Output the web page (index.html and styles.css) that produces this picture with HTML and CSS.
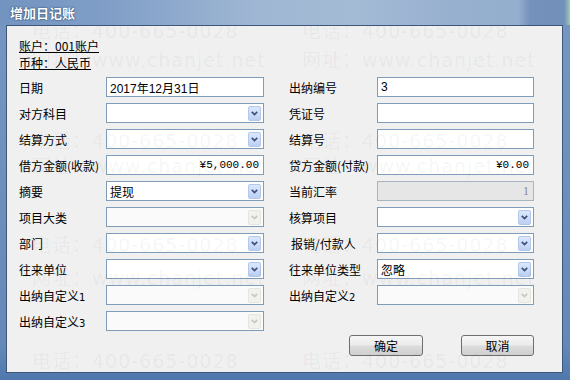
FILE: index.html
```html
<!DOCTYPE html>
<html>
<head>
    <title>增加日记账</title>
    <link rel="stylesheet" href="styles.css">
</head>
<body>
    <div class="window">
        <div class="titlebar"><span class="title">增加日记账</span></div>
        <div class="frame">
            <div class="client">
                <div class="info">账户：001账户</div>
                <div class="info">币种：人民币</div>

                <div class="fields">
                    <div class="row">
                        <div class="cell"><label>日期</label><div class="box">2017年12月31日</div></div>
                        <div class="cell right"><label>出纳编号</label><div class="box">3</div></div>
                    </div>
                    <div class="row">
                        <div class="cell"><label>对方科目</label><div class="box combo"><span class="val"></span><span class="drop"><svg viewBox="0 0 7 5"><path d="M0.8 0.8 L3.5 3.6 L6.2 0.8"/></svg></span></div></div>
                        <div class="cell right"><label>凭证号</label><div class="box"></div></div>
                    </div>
                    <div class="row">
                        <div class="cell"><label>结算方式</label><div class="box combo"><span class="val"></span><span class="drop"><svg viewBox="0 0 7 5"><path d="M0.8 0.8 L3.5 3.6 L6.2 0.8"/></svg></span></div></div>
                        <div class="cell right"><label>结算号</label><div class="box"></div></div>
                    </div>
                    <div class="row">
                        <div class="cell"><label>借方金额(收款)</label><div class="box amount">¥5,000.00</div></div>
                        <div class="cell right"><label>贷方金额(付款)</label><div class="box amount">¥0.00</div></div>
                    </div>
                    <div class="row">
                        <div class="cell"><label>摘要</label><div class="box combo"><span class="val">提现</span><span class="drop"><svg viewBox="0 0 7 5"><path d="M0.8 0.8 L3.5 3.6 L6.2 0.8"/></svg></span></div></div>
                        <div class="cell right"><label>当前汇率</label><div class="box readonly">1</div></div>
                    </div>
                    <div class="row">
                        <div class="cell"><label>项目大类</label><div class="box combo disabled"><span class="val"></span><span class="drop"><svg viewBox="0 0 7 5"><path d="M0.8 0.8 L3.5 3.6 L6.2 0.8"/></svg></span></div></div>
                        <div class="cell right"><label>核算项目</label><div class="box combo"><span class="val"></span><span class="drop"><svg viewBox="0 0 7 5"><path d="M0.8 0.8 L3.5 3.6 L6.2 0.8"/></svg></span></div></div>
                    </div>
                    <div class="row">
                        <div class="cell"><label>部门</label><div class="box combo"><span class="val"></span><span class="drop"><svg viewBox="0 0 7 5"><path d="M0.8 0.8 L3.5 3.6 L6.2 0.8"/></svg></span></div></div>
                        <div class="cell right"><label class="indent">报销/付款人</label><div class="box combo"><span class="val"></span><span class="drop"><svg viewBox="0 0 7 5"><path d="M0.8 0.8 L3.5 3.6 L6.2 0.8"/></svg></span></div></div>
                    </div>
                    <div class="row">
                        <div class="cell"><label>往来单位</label><div class="box combo"><span class="val"></span><span class="drop"><svg viewBox="0 0 7 5"><path d="M0.8 0.8 L3.5 3.6 L6.2 0.8"/></svg></span></div></div>
                        <div class="cell right"><label>往来单位类型</label><div class="box combo"><span class="val">忽略</span><span class="drop"><svg viewBox="0 0 7 5"><path d="M0.8 0.8 L3.5 3.6 L6.2 0.8"/></svg></span></div></div>
                    </div>
                    <div class="row">
                        <div class="cell"><label>出纳自定义<small>1</small></label><div class="box combo disabled"><span class="val"></span><span class="drop"><svg viewBox="0 0 7 5"><path d="M0.8 0.8 L3.5 3.6 L6.2 0.8"/></svg></span></div></div>
                        <div class="cell right"><label>出纳自定义<small>2</small></label><div class="box combo disabled"><span class="val"></span><span class="drop"><svg viewBox="0 0 7 5"><path d="M0.8 0.8 L3.5 3.6 L6.2 0.8"/></svg></span></div></div>
                    </div>
                    <div class="row">
                        <div class="cell"><label>出纳自定义<small>3</small></label><div class="box combo disabled"><span class="val"></span><span class="drop"><svg viewBox="0 0 7 5"><path d="M0.8 0.8 L3.5 3.6 L6.2 0.8"/></svg></span></div></div>
                    </div>
                </div>

                <div class="actions">
                    <button class="ok">确定</button>
                    <button class="cancel">取消</button>
                </div>

                <!-- watermark over the dialog -->
                <div class="watermark">
                    <div class="wm l t1">电话：400-665-0028</div>
                    <div class="wm r t1">电话：400-665-0028</div>
                    <div class="wm l t2">网址：www.chanjet.net</div>
                    <div class="wm r t2">网址：www.chanjet.net</div>
                    <div class="wm l t3">电话：400-665-0028</div>
                    <div class="wm r t3">电话：400-665-0028</div>
                    <div class="wm l t4">网址：www.chanjet.net</div>
                    <div class="wm r t4">网址：www.chanjet.net</div>
                    <div class="wm l t5">电话：400-665-0028</div>
                    <div class="wm r t5">电话：400-665-0028</div>
                    <div class="wm l t6">网址：www.chanjet.net</div>
                    <div class="wm r t6">网址：www.chanjet.net</div>
                    <div class="wm l t7">电话：400-665-0028</div>
                    <div class="wm r t7">电话：400-665-0028</div>
                </div>
            </div>
        </div>
    </div>
</body>
</html>
```

FILE: styles.css
```css
body { margin: 0; font-family: "Noto Sans CJK SC", sans-serif; font-size: 12px; color: #000; }

.window { width: 570px; height: 380px; display: flex; flex-direction: column; background: #6f91bd; }
.titlebar {
    height: 25px; display: flex; align-items: center; padding-left: 10px;
    background: linear-gradient(90deg, #7394c0 0%, #819fc8 20%, #9fb7d3 45%, #a4bbd5 62%, #97b0cf 80%, #93aece 91%, #7491bc 93%, #7390bb 99%, #9ccab0 100%);
}
.title { color: #fff; font-weight: bold; font-size: 13px; text-shadow: 0 0 2px #2e4870, 0 0 1px #2e4870; }

.frame { flex: 1; padding: 0 7px 7px 6px; background: linear-gradient(180deg, #7496c1, #6588b8 90%, #5078ad); }
.client {
    position: relative; height: 100%; box-sizing: border-box; overflow: hidden;
    border: 1px solid #3e5678; background: #f0f0f0;
    padding: 11px 28px 0 12px;
}

.info { line-height: 17px; text-decoration: underline; }

.fields { margin-top: 6px; display: flex; flex-direction: column; gap: 6px; }
.row { display: flex; height: 20px; gap: 25px; }
.cell { display: flex; align-items: center; }
.cell label { width: 87px; white-space: nowrap; }
.cell.right label { width: 88px; }
.cell label.indent { padding-left: 2px; width: 86px; }
.cell label small { font-family: "DejaVu Sans", sans-serif; font-size: 10px; }

.box {
    width: 158px; height: 20px; box-sizing: border-box;
    border: 1px solid #7f9db9; background: #fff;
    display: flex; align-items: center; padding: 0 2px 0 3px;
    font-family: "Liberation Sans", "Noto Sans CJK SC", sans-serif; font-size: 12px;
}
.right .box { width: 157px; }
.box.amount { justify-content: flex-end; padding-right: 4px; font-family: "Liberation Mono", monospace; font-size: 11px; }
.box.readonly { justify-content: flex-end; padding-right: 4px; background: #e6e6e6; border-color: #a7b4c2; color: #8a8a8a; font-family: "Liberation Serif", serif; }

.combo .val { flex: 1; }
.drop {
    width: 13px; height: 15px; box-sizing: border-box; border-radius: 2px;
    border: 1px solid #b2c7ec; background: linear-gradient(180deg, #dce7fb, #bdd0f3);
    display: flex; align-items: center; justify-content: center;
}
.drop svg { width: 7px; height: 5px; fill: none; stroke: #3c5079; stroke-width: 1.7; }
.combo.disabled { background: #fafafa; }
.combo.disabled .drop { border-color: #e6e6e0; background: #f1f1ed; }
.combo.disabled .drop svg { stroke: #c8c8c4; }

.actions { display: flex; justify-content: flex-end; gap: 38px; margin-top: 4px; }
button {
    height: 21px; padding: 0; border: 1px solid #6f6f6f; border-radius: 3px;
    background: linear-gradient(180deg, #f6f6f6 0%, #ececec 45%, #dcdcdc 55%, #cfcfcf 100%);
    font-family: "Noto Sans CJK SC", sans-serif; font-size: 12px; color: #000;
}
.ok { width: 74px; }
.cancel { width: 73px; }

.watermark { position: absolute; inset: 0; pointer-events: none; color: rgba(0, 0, 0, 0.05); font-family: "DejaVu Sans", "Noto Sans CJK SC", sans-serif; font-size: 19px; letter-spacing: 1px; }
.wm { position: absolute; white-space: nowrap; line-height: 20px; }
.wm.l { left: 25px; }
.wm.r { left: 295px; }
.t1 { top: -5px; }
.t2 { top: 24px; }
.t3 { top: 105px; }
.t4 { top: 130px; }
.t5 { top: 209px; }
.t6 { top: 242px; }
.t7 { top: 325px; }
```
